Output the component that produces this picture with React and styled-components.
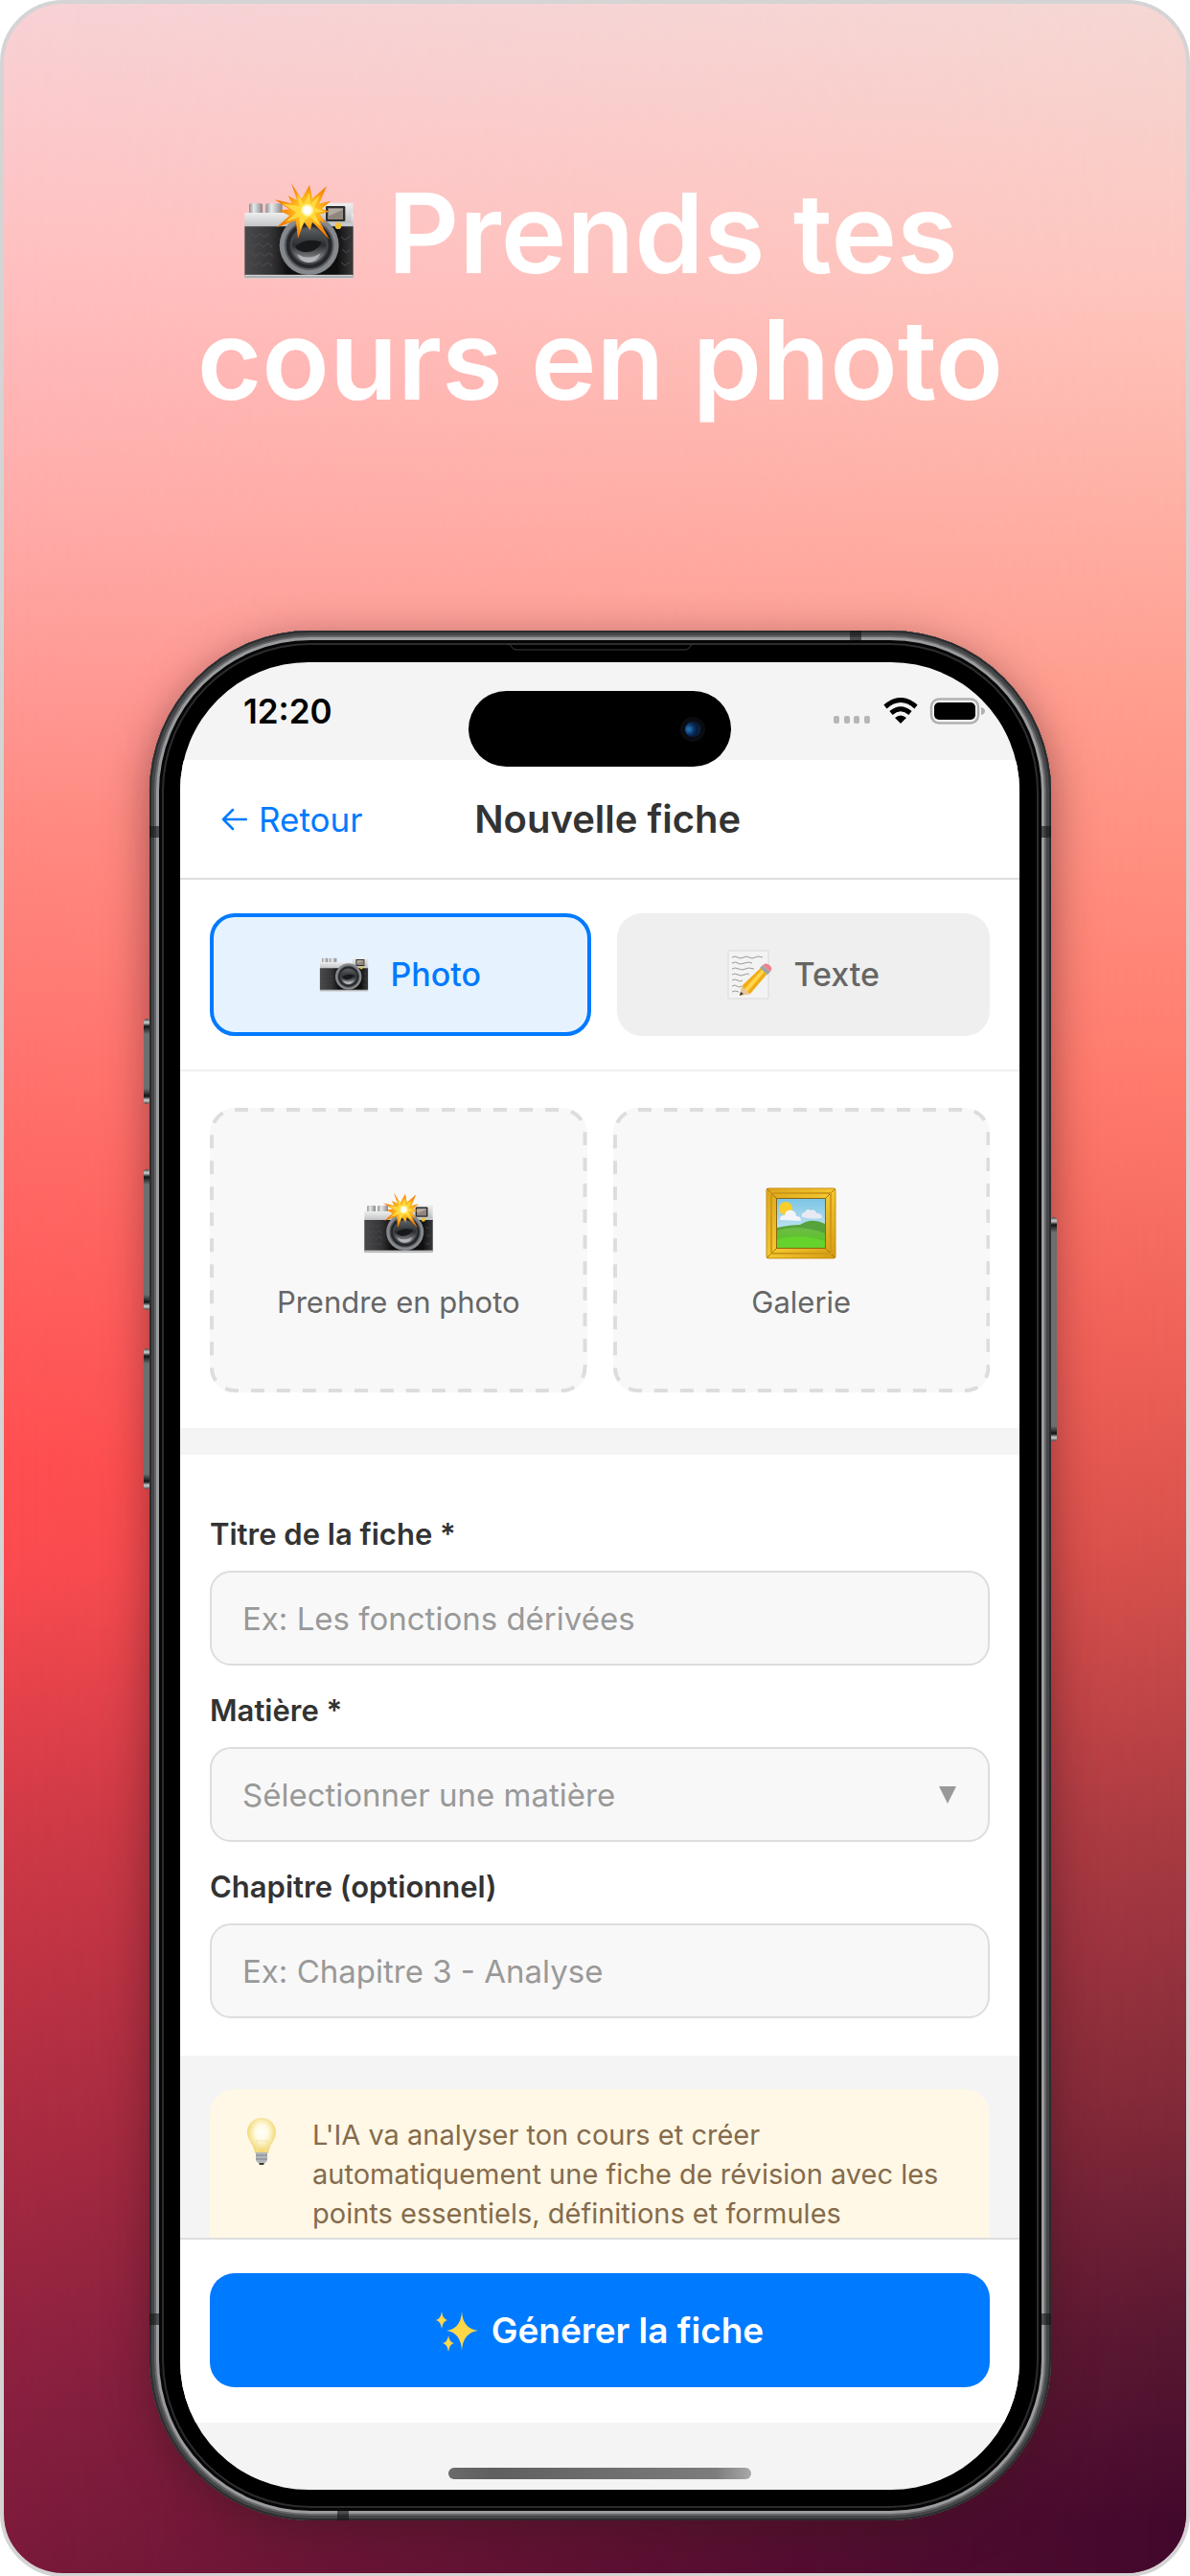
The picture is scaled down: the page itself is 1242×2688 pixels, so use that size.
import React from 'react';
import styled, { createGlobalStyle } from 'styled-components';

const GlobalStyle = createGlobalStyle`
  * {
    box-sizing: border-box;
  }
  body {
    margin: 0;
    background: #fff;
    font-family: Inter, "Liberation Sans", sans-serif;
  }
  button, input, select {
    font-family: inherit;
    margin: 0;
  }
`;

const Stage = styled.main`
  position: relative;
  isolation: isolate;
  min-height: 100vh;
  padding: 173px 141px 55px 152px;
  border: 4px solid #d5d4d5;
  border-radius: 66px;
  overflow: hidden;
  background: linear-gradient(
    180deg,
    #f8d2d6 0%,
    #ffc2c3 9%,
    #ffaba9 20%,
    #ff8a82 32%,
    #ff6a66 45%,
    #ff4e50 57%,
    #fa4b50 61%,
    #d43b47 70%,
    #aa2b41 83%,
    #8a2040 93%,
    #7a1a3a 100%
  );

  /* warmer, darker ramp that takes over towards the right edge */
  &::before {
    content: '';
    position: absolute;
    inset: 0;
    z-index: -1;
    background: linear-gradient(
      180deg,
      #f5d7d4 0%,
      #fec5bd 11%,
      #ffa091 26%,
      #ff7b6c 42%,
      #ef6258 52%,
      #d8524c 60%,
      #a93b42 71%,
      #842b39 81%,
      #571731 91%,
      #42082c 98%
    );
    mask-image: linear-gradient(90deg, transparent, #000);
  }
`;

const Headline = styled.h1`
  margin: 0 0 217px;
  color: #fff;
  font-size: 116px;
  line-height: 132px;
  font-weight: 600;
  text-align: center;

  svg {
    width: 118px;
    height: 104px;
    margin-right: 4px;
    vertical-align: -8px;
  }
`;

/* ---------- device ---------- */

const Device = styled.section`
  position: relative;
  padding: 33px 33px 32px 32px;
  border-radius: 168px;
  background: #000;
  box-shadow:
    inset 0 0 0 2px #2b2c2e,
    inset 0 0 0 5px #454648,
    inset 0 0 0 7px #66676a,
    inset 0 0 0 10px #9a9b9d,
    inset 0 0 0 13px #060606,
    inset 0 0 0 15px #2c2c2e,
    0 12px 44px rgba(60, 20, 30, 0.5);
`;

const SideKey = styled.span`
  position: absolute;
  ${({ $side }) => $side}: -6px;
  top: ${({ $top }) => $top}px;
  width: 6px;
  height: ${({ $height }) => $height}px;
  border-radius: 3px;
  background: linear-gradient(
    180deg,
    #444 0,
    #d0d0d0 4px,
    #111 8px,
    #6d6e70 16px,
    #6d6e70 calc(100% - 16px),
    #111 calc(100% - 8px),
    #d0d0d0 calc(100% - 4px),
    #444 100%
  );
`;

const Antenna = styled.span`
  position: absolute;
  ${({ $side }) => $side}: 0;
  ${({ $from }) => $from}: ${({ $offset }) => $offset}px;
  width: ${({ $flat }) => ($flat ? 12 : 10)}px;
  height: ${({ $flat }) => ($flat ? 10 : 12)}px;
  background: rgba(20, 20, 22, 0.6);
`;

const Earpiece = styled.svg`
  position: absolute;
  top: 13px;
  left: 50%;
  width: 196px;
  height: 8px;
  margin-left: -98px;
`;

const Screen = styled.div`
  display: flex;
  flex-direction: column;
  overflow: hidden;
  border-radius: 134px;
  background: #f4f4f4;
`;

const StatusBar = styled.div`
  position: relative;
  display: flex;
  align-items: center;
  justify-content: space-between;
  height: 102px;
  padding: 0 36px 0 66px;
`;

const Clock = styled.time`
  color: #000;
  font-size: 35px;
  line-height: 42px;
  font-weight: 600;
`;

const Island = styled.div`
  position: absolute;
  top: 30px;
  left: 50%;
  display: flex;
  align-items: center;
  justify-content: flex-end;
  width: 274px;
  height: 79px;
  margin-left: -137px;
  padding-right: 27px;
  border-radius: 40px;
  background: #000;
`;

const Lens = styled.span`
  width: 26px;
  height: 26px;
  border: 5px solid #0b0c10;
  border-radius: 50%;
  background: radial-gradient(circle at 25% 50%, #1f6cab 0 10%, #0b3362 38%, #061a38 62%, #0f3a68 100%);
`;

const StatusIcons = styled.svg`
  width: 158px;
  height: 28px;
`;

/* ---------- app ---------- */

const NavBar = styled.header`
  display: flex;
  align-items: center;
  justify-content: space-between;
  height: 125px;
  padding: 0 43px;
  border-bottom: 2px solid #dedede;
  background: #fff;
`;

const BackButton = styled.button`
  display: flex;
  align-items: center;
  gap: 12px;
  padding: 0;
  border: 0;
  background: none;
  color: #007aff;
  font-size: 35px;
  line-height: 42px;

  svg {
    width: 27px;
    height: 24px;
  }
`;

const NavTitle = styled.h2`
  margin: 0;
  color: #333;
  font-size: 40px;
  line-height: 46px;
  font-weight: 600;
`;

const NavSpacer = styled.span`
  width: 131px;
`;

const Tabs = styled.div`
  display: flex;
  gap: 27px;
  padding: 35px 31px;
  border-bottom: 2px solid #f0f0f0;
  background: #fff;
`;

const Tab = styled.button`
  flex: 1 1 0;
  display: flex;
  align-items: center;
  justify-content: center;
  gap: 22px;
  height: 128px;
  padding: 0;
  border: ${({ $active }) => ($active ? '4px solid #007aff' : '0')};
  border-radius: 26px;
  background: ${({ $active }) => ($active ? '#e6f3ff' : '#efefef')};
  color: ${({ $active }) => ($active ? '#007aff' : '#666')};
  font-size: 34px;
  line-height: 42px;
  font-weight: 500;
`;

const TabCamera = styled.span`
  display: flex;

  svg {
    width: 52px;
    height: 38px;
  }
`;

const TabMemo = styled.span`
  display: flex;

  svg {
    width: 48px;
    height: 52px;
  }
`;

const Sources = styled.div`
  display: grid;
  grid-template-columns: 1fr 1fr;
  gap: 27px;
  padding: 38px 31px 37px;
  background: #fff;
`;

const SourceButton = styled.button`
  position: relative;
  display: flex;
  flex-direction: column;
  align-items: center;
  gap: 22px;
  height: 297px;
  padding: 80px 0 0;
  border: 0;
  border-radius: 26px;
  background: #f8f8f8;
  color: #666;
  font-size: 31px;
  line-height: 42px;
`;

const DashedEdge = styled.svg`
  position: absolute;
  inset: 0;
  width: 100%;
  height: 100%;

  rect {
    width: calc(100% - 4px);
    height: calc(100% - 4px);
    fill: none;
    stroke: #ddd;
    stroke-width: 4px;
    stroke-dasharray: 14 13;
  }
`;

const SourceIcon = styled.span`
  display: flex;
  align-items: center;

  svg {
    width: 74px;
    height: 80px;
  }
`;

const Band = styled.div`
  height: 28px;
`;

const Form = styled.form`
  display: flex;
  flex-direction: column;
  gap: 29px;
  padding: 65px 31px 39px;
  background: #fff;
`;

const Field = styled.div`
  display: flex;
  flex-direction: column;
  gap: 20px;
`;

const Label = styled.label`
  color: #333;
  font-size: 31px;
  line-height: 36px;
  font-weight: 600;
`;

const controlStyle = `
  width: 100%;
  height: 99px;
  padding: 0 32px;
  border: 2px solid #ddd;
  border-radius: 22px;
  background: #f8f8f8;
  color: #999;
  font-size: 33px;
  line-height: 42px;
`;

const TextInput = styled.input`
  ${controlStyle}

  &::placeholder {
    color: #999;
    opacity: 1;
  }
`;

const SelectBox = styled.div`
  display: grid;
  align-items: center;

  > * {
    grid-area: 1 / 1;
  }
  svg {
    justify-self: end;
    width: 18px;
    height: 18px;
    margin-right: 35px;
    pointer-events: none;
  }
`;

const Select = styled.select`
  ${controlStyle}
  appearance: none;
`;

const TipArea = styled.div`
  max-height: 190px;
  padding: 35px 31px 0;
  overflow: hidden;
`;

const Tip = styled.aside`
  display: flex;
  align-items: flex-start;
  gap: 33px;
  padding: 27px 34px;
  border-radius: 26px;
  background: #fff8e6;

  > svg {
    flex: none;
    width: 40px;
    height: 54px;
  }
`;

const TipText = styled.p`
  margin: 0;
  color: #856b4c;
  font-size: 29px;
  line-height: 41px;
`;

const Footer = styled.footer`
  padding: 35px 31px 37px;
  border-top: 2px solid #dedede;
  background: #fff;
`;

const SubmitButton = styled.button`
  display: flex;
  align-items: center;
  justify-content: center;
  gap: 14px;
  width: 100%;
  height: 119px;
  border: 0;
  border-radius: 26px;
  background: #007aff;
  color: #fff;
  font-size: 37px;
  line-height: 46px;
  font-weight: 600;

  svg {
    width: 44px;
    height: 44px;
  }
`;

const HomeArea = styled.div`
  display: flex;
  justify-content: center;
  padding: 47px 0 11px;
`;

const HomeIndicator = styled.span`
  width: 316px;
  height: 12px;
  border-radius: 6px;
  background: linear-gradient(90deg, #6a6a6a, #5f5f5f 15%, #757575 70%, #7c7c7c 88%, #a8a8a8);
`;

/* ---------- drawings ---------- */

const HiddenDefs = styled.svg`
  position: absolute;
  width: 0;
  height: 0;
`;

function SharedDefs() {
  return (
    <HiddenDefs aria-hidden="true">
      <defs>
        <linearGradient id="chrome" x1="0" y1="0" x2="0" y2="1">
          <stop offset="0" stopColor="#eeeeee" />
          <stop offset="1" stopColor="#b9bbbd" />
        </linearGradient>
        <linearGradient id="knob" x1="0" y1="0" x2="1" y2="0">
          <stop offset="0" stopColor="#8d8f92" />
          <stop offset="0.35" stopColor="#e9eaeb" />
          <stop offset="1" stopColor="#85878a" />
        </linearGradient>
        <linearGradient id="leather" x1="0" y1="0" x2="1" y2="0">
          <stop offset="0" stopColor="#4a4a4c" />
          <stop offset="0.25" stopColor="#333335" />
          <stop offset="0.4" stopColor="#0e0e0f" />
          <stop offset="0.85" stopColor="#0e0e0f" />
          <stop offset="1" stopColor="#3a3a3c" />
        </linearGradient>
        <linearGradient id="glass" x1="0" y1="0" x2="0" y2="1">
          <stop offset="0" stopColor="#5c6064" />
          <stop offset="0.5" stopColor="#2b2d30" />
          <stop offset="1" stopColor="#9a9da0" />
        </linearGradient>
        <radialGradient id="burst" cx="224" cy="117" r="92" gradientUnits="userSpaceOnUse">
          <stop offset="0" stopColor="#ffd22e" />
          <stop offset="0.45" stopColor="#ffb41c" />
          <stop offset="0.7" stopColor="#fb9410" />
          <stop offset="1" stopColor="#f07c00" />
        </radialGradient>
        <linearGradient id="gold" x1="0" y1="0" x2="1" y2="1">
          <stop offset="0" stopColor="#dca41c" />
          <stop offset="0.5" stopColor="#f2c72f" />
          <stop offset="1" stopColor="#d39a12" />
        </linearGradient>
        <linearGradient id="sky" x1="0" y1="0" x2="0" y2="1">
          <stop offset="0" stopColor="#7cc5e6" />
          <stop offset="1" stopColor="#e6f4f7" />
        </linearGradient>
        <linearGradient id="grass" x1="0" y1="0" x2="0" y2="1">
          <stop offset="0" stopColor="#6dbb45" />
          <stop offset="1" stopColor="#53c81e" />
        </linearGradient>
        <radialGradient id="bulb" cy="0.42">
          <stop offset="0" stopColor="#ffffff" />
          <stop offset="0.45" stopColor="#fffbe2" />
          <stop offset="1" stopColor="#f3d978" />
        </radialGradient>
      </defs>
    </HiddenDefs>
  );
}

function CameraIcon({ flash }) {
  return (
    <svg viewBox={flash ? '22 26 352 312' : '22 90 352 246'} aria-hidden="true">
      <path d="M42 128V101q0-5 5-5h32q5 0 5 5v27z" fill="url(#knob)" />
      <path d="M94 128V101q0-5 5-5h42q5 0 5 5v27z" fill="url(#knob)" />
      <path d="M258 94H363q5 0 5 5v75H258z" fill="url(#chrome)" />
      <rect x="28" y="125" width="340" height="52" rx="5" fill="url(#chrome)" />
      <rect x="258" y="98" width="104" height="60" fill="url(#chrome)" />
      <path d="M28 168H368V322H28z" fill="url(#leather)" />
      <path d="M48 190l14 12 14-12 14 12 14-12M44 220l14 12 14-12 14 12 14-12 14 12M48 250l14 12 14-12 14 12 14-12 14 12M44 280l14 12 14-12 14 12 14-12 14 12M330 200l12 10 14-10M334 240l12 10 12-10M330 280l12 10 14-10" fill="none" stroke="#505053" strokeWidth="3" />
      <rect x="28" y="319" width="340" height="12" rx="3" fill="#d3d4d6" />
      <path d="M28 326H368" stroke="#87898c" strokeWidth="3" />
      <rect x="282" y="104" width="61" height="48" rx="4" fill="#2c2c2e" />
      <rect x="289" y="111" width="47" height="34" fill="#b3aaa0" />
      <path d="M289 136l47-21v30h-47z" fill="#8f867d" />
      <circle cx="321" cy="166" r="10" fill="#f0c233" />
      <circle cx="230" cy="227" r="93" fill="#85888c" />
      <circle cx="230" cy="227" r="78" fill="#5a5c60" />
      <circle cx="230" cy="227" r="72" fill="#25272a" />
      <circle cx="230" cy="227" r="60" fill="#45484c" />
      <circle cx="230" cy="227" r="54" fill="url(#glass)" />
      <path d="M186 231q34-30 84-14-20 36-60 30-18-3-24-16z" fill="#17181a" />
      <path d="M192 254q36 22 74-2-12 28-38 28-24 0-36-26z" fill="#c4c6c8" opacity="0.75" />
      {flash && (
        <>
          <path
            d="M174 32L206 82 231 38 240 80 285 42 262 96 298 88 270 112 292 121 264 130 283 158 262 150 293 208 240 154 233 180 214 154 195 206 188 150 128 171 168 134 136 118 168 114 122 84 176 96 164 72 192 86z"
            fill="url(#burst)"
          />
          <path
            d="M192 66L213 98 230 62 234 98 264 70 246 108 278 121 246 126 266 168 232 138 218 148 201 180 200 138 156 154 190 124 146 96 200 104z"
            fill="#ffdf45"
            opacity="0.85"
          />
          <circle cx="224" cy="117" r="19" fill="#fff59a" />
          <circle cx="224" cy="117" r="13" fill="#fff" />
        </>
      )}
    </svg>
  );
}

function PictureIcon() {
  return (
    <svg viewBox="0 0 74 80" aria-hidden="true">
      <rect x="1" y="4" width="72" height="73" rx="2" fill="url(#gold)" />
      <rect x="1" y="4" width="72" height="73" rx="2" fill="none" stroke="#c98f12" strokeWidth="1" />
      <path d="M1 4l11 11M73 4L62 15M1 77l11-11M73 77L62 66" stroke="#a87408" strokeWidth="1" />
      <rect x="6" y="9" width="62" height="63" fill="none" stroke="#d09a18" strokeWidth="2" />
      <rect x="11" y="14" width="52" height="53" fill="#8c6410" />
      <rect x="12" y="15" width="50" height="51" fill="url(#sky)" />
      <circle cx="21" cy="25" r="7" fill="#f8cf2e" />
      <path d="M15 37q0-5 5-5 1-6 7-5 5 1 5 6 5 0 5 5z" fill="#f4f4fa" />
      <path d="M38 34q-1-5 3-5 2-5 6-2 5-2 6 3 6 0 6 5-10 2-21-1z" fill="#e9e9f4" />
      <path d="M12 45q14-3 24-3 12-8 26-1v25H12z" fill="#56a33c" />
      <path d="M12 48q22-7 50 3v15H12z" fill="url(#grass)" />
      <path d="M12 58q22-8 50 1v7H12z" fill="#66d22c" />
    </svg>
  );
}

function MemoIcon() {
  return (
    <svg viewBox="0 0 48 52" aria-hidden="true">
      <rect x="2" y="1" width="42" height="50" rx="1" fill="#f3f3f3" stroke="#d9d9d9" />
      <path d="M6 8q3-2 6 0t6 0 6 0 6 0 8 0M6 14q4-2 6 0t7 0 8 0M6 20q3-2 7 0t7 0 9 0M6 26q3-2 6 0t7 0 5 0M6 32q3-2 6 0t5 0M6 38q3-2 5 0t5 0M6 44q3-2 7 0" fill="none" stroke="#9a9a9a" strokeWidth="1" />
      <path d="M14 48l3-11L36 19l7 6-18 21z" fill="#f0ac18" />
      <path d="M19 41L37 21l3 2-18 21z" fill="#ffd64a" />
      <path d="M14 48l2-10 9 8z" fill="#e8c79a" />
      <path d="M14 48l1-4 3 2z" fill="#3a3a3a" />
      <path d="M35 19l3-3 8 7-3 3z" fill="#9fa4a8" />
      <path d="M38 16q3-3 7 0t1 7z" fill="#ef7f8c" />
    </svg>
  );
}

function BulbIcon() {
  return (
    <svg viewBox="0 0 40 54" aria-hidden="true">
      <path d="M20 3c-9 0-15 7-15 15 0 9 7 12 8 22h14c1-10 8-13 8-22 0-8-6-15-15-15z" fill="url(#bulb)" />
      <path d="M16 38l-2-12q3 3 6 0 3 3 6 0l-2 12" fill="none" stroke="#f5e5ae" strokeWidth="1" />
      <path d="M14 39h12v8q0 2-3 3h-6q-3-1-3-3z" fill="#b4b7bb" />
      <path d="M14 42h12M14 46h12" stroke="#808387" strokeWidth="1" />
      <path d="M17 50h6l-1 2h-4z" fill="#3b3b3b" />
    </svg>
  );
}

function SparklesIcon() {
  return (
    <svg viewBox="0 0 44 44" aria-hidden="true">
      <g fill="#ffd84a">
        <path d="M27 2q1 18 17 20-16 2-17 21-1-19-16-21 15-2 16-20z" />
        <path d="M6 2q1 8 6 9-5 1-6 9-1-8-6-9 5-1 6-9z" />
        <path d="M13 27q1 7 6 8-5 1-6 9-1-8-6-9 5-1 6-8z" />
      </g>
    </svg>
  );
}

function DeviceStatus() {
  return (
    <StatusIcons viewBox="0 0 158 28" aria-hidden="true">
      <g fill="#b6b6b6">
        <rect x="0" y="19" width="6" height="8" rx="2" />
        <rect x="11" y="19" width="6" height="8" rx="2" />
        <rect x="21" y="19" width="6" height="8" rx="2" />
        <rect x="32" y="19" width="6" height="8" rx="2" />
      </g>
      <path d="M54 9.500Q70-4.500 86 9.500" fill="none" stroke="#000" strokeWidth="5" />
      <path d="M60 16Q70 7.500 80 16" fill="none" stroke="#000" strokeWidth="5" />
      <path d="M70 27l-6-6q6-5 12 0z" />
      <rect x="102" y="1.500" width="49" height="25" rx="8" fill="none" stroke="#b0b0b0" strokeWidth="2.500" />
      <rect x="105" y="5" width="43" height="18" rx="5" />
      <path d="M154 10q4 1 4 4t-4 4z" fill="#b0b0b0" />
    </StatusIcons>
  );
}

function Source({ icon, label }) {
  return (
    <SourceButton type="button">
      <DashedEdge aria-hidden="true">
        <rect x="2" y="2" rx="24" />
      </DashedEdge>
      <SourceIcon>{icon}</SourceIcon>
      {label}
    </SourceButton>
  );
}

function TextField({ id, label, placeholder }) {
  return (
    <Field>
      <Label htmlFor={id}>{label}</Label>
      <TextInput id={id} type="text" placeholder={placeholder} />
    </Field>
  );
}

function App() {
  return (
    <>
      <GlobalStyle />
      <SharedDefs />
      <Stage>
        <Headline>
          <CameraIcon flash /> Prends tes
          <br />
          cours en photo
        </Headline>

        <Device>
          <SideKey $side="left" $top={405} $height={89} />
          <SideKey $side="left" $top={562} $height={147} />
          <SideKey $side="left" $top={749} $height={147} />
          <SideKey $side="right" $top={612} $height={234} />
          <Antenna $side="left" $from="top" $offset={204} />
          <Antenna $side="right" $from="top" $offset={204} />
          <Antenna $side="left" $from="bottom" $offset={204} />
          <Antenna $side="right" $from="bottom" $offset={204} />
          <Antenna $flat $side="top" $from="right" $offset={198} />
          <Antenna $flat $side="bottom" $from="left" $offset={196} />
          <Earpiece viewBox="0 0 196 8" aria-hidden="true">
            <path d="M0 1q4 0 5 3t5 3H186q4 0 5-3t5-3" fill="none" stroke="#3a3a3c" />
          </Earpiece>

          <Screen>
            <StatusBar>
              <Clock>12:20</Clock>
              <DeviceStatus />
              <Island>
                <Lens />
              </Island>
            </StatusBar>

            <NavBar>
              <BackButton type="button">
                <svg viewBox="0 0 27 24" fill="none" stroke="currentColor" strokeWidth="2.500" strokeLinecap="round" strokeLinejoin="round" aria-hidden="true">
                  <path d="M26 12H2M12 2L2 12l10 10" />
                </svg>
                Retour
              </BackButton>
              <NavTitle>Nouvelle fiche</NavTitle>
              <NavSpacer />
            </NavBar>

            <Tabs>
              <Tab type="button" $active aria-pressed="true">
                <TabCamera><CameraIcon /></TabCamera>
                Photo
              </Tab>
              <Tab type="button" aria-pressed="false">
                <TabMemo><MemoIcon /></TabMemo>
                Texte
              </Tab>
            </Tabs>

            <Sources>
              <Source icon={<CameraIcon flash />} label="Prendre en photo" />
              <Source icon={<PictureIcon />} label="Galerie" />
            </Sources>

            <Band />

            <Form id="fiche" onSubmit={(e) => e.preventDefault()}>
              <TextField id="titre" label="Titre de la fiche *" placeholder="Ex: Les fonctions dérivées" />
              <Field>
                <Label htmlFor="matiere">Matière *</Label>
                <SelectBox>
                  <Select id="matiere" defaultValue="">
                    <option value="">Sélectionner une matière</option>
                  </Select>
                  <svg viewBox="0 0 18 18" aria-hidden="true">
                    <path d="M0 0h18L9 18z" fill="#999" />
                  </svg>
                </SelectBox>
              </Field>
              <TextField id="chapitre" label="Chapitre (optionnel)" placeholder="Ex: Chapitre 3 - Analyse" />
            </Form>

            <TipArea>
              <Tip>
                <BulbIcon />
                <TipText>
                  L'IA va analyser ton cours et créer automatiquement une fiche de révision avec les
                  points essentiels, définitions et formules
                </TipText>
              </Tip>
            </TipArea>

            <Footer>
              <SubmitButton type="submit" form="fiche">
                <SparklesIcon />
                Générer la fiche
              </SubmitButton>
            </Footer>

            <HomeArea>
              <HomeIndicator />
            </HomeArea>
          </Screen>
        </Device>
      </Stage>
    </>
  );
}

export default App;
